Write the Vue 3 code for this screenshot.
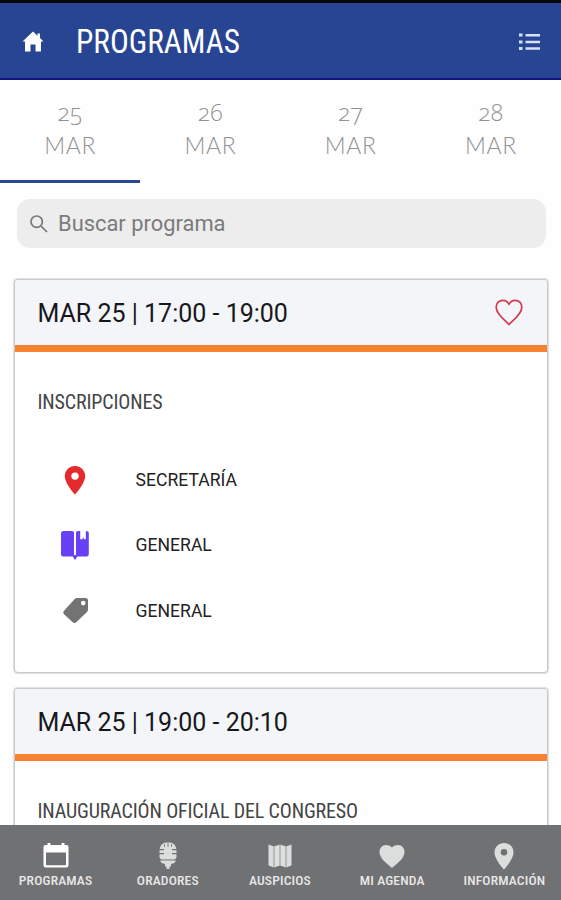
<template>
  <div class="app-page">
    <header class="top-bar">
      <svg class="home-icon" viewBox="0 0 22 21">
        <path d="M11 0.5 L0.5 10.5 H3 V20.5 H8.5 V13.5 H13.5 V20.5 H19 V10.5 H21.5 L18 7 V2.5 H15.5 V4.7 Z" />
      </svg>
      <h1 class="page-title"><span>PROGRAMAS</span></h1>
      <svg class="list-icon" viewBox="0 0 21 18">
        <path d="M0 0.5h3.5v3H0zM0 7.5h3.5v3H0zM0 14h3.5v3H0zM6.5 1h14.5v2.4H6.5zM6.5 7.8h14.5v2.4H6.5zM6.5 14.3h14.5v2.4H6.5z" />
      </svg>
    </header>

    <nav class="day-tabs">
      <button v-for="day in days" :key="day" :class="['day-tab', { active: day === selectedDay }]" @click="selectedDay = day">
        <span class="day-number">{{ day }}</span>
        <span class="day-month">MAR</span>
      </button>
    </nav>

    <label class="search-box">
      <svg class="search-icon" viewBox="0 0 18 18">
        <circle cx="6.7" cy="6.7" r="5.7" />
        <path d="M11 11 L17 17" />
      </svg>
      <input v-model="search" type="text" placeholder="Buscar programa" />
    </label>

    <main class="program-list">
      <article v-for="item in programs" :key="item.time" class="program-card">
        <div class="card-header">
          <span>{{ item.time }}</span>
          <svg v-if="item.favorite" class="heart-icon" viewBox="0 0 28 27">
            <path d="M14 25.5 C10 21.5 1.2 15 1.2 8.5 C1.2 4 4.2 1.3 7.8 1.3 C10.7 1.3 12.7 2.8 14 5.2 C15.3 2.8 17.3 1.3 20.2 1.3 C23.8 1.3 26.8 4 26.8 8.5 C26.8 15 18 21.5 14 25.5 Z" />
          </svg>
        </div>
        <div class="card-body">
          <h2 class="program-title">{{ item.title }}</h2>
          <ul class="detail-list">
            <li v-for="detail in item.details" :key="detail.icon">
              <svg class="detail-icon" viewBox="0 0 30 30">
                <path v-if="detail.icon === 'pin'" fill="#e52a2e" fill-rule="evenodd" d="M15 1 C9.2 1 4.8 5.5 4.8 11.2 C4.8 18.3 15 29.5 15 29.5 S25.2 18.3 25.2 11.2 C25.2 5.5 20.8 1 15 1 Z M15 7.4 a3.7 3.7 0 1 1 0 7.4 a3.7 3.7 0 1 1 0-7.4 Z" />
                <path v-else-if="detail.icon === 'book'" fill="#6840f5" d="M3.5 1 H12 Q14 1 14 3 V25 H16 V3 Q16 1 18 1 H20.2 V9.2 H22.2 L23.2 7.5 L24.2 9.2 H25.8 V1 Q28.8 1 28.8 3 V24 Q28.8 26.5 26.5 26.5 H17.2 L15.5 29.5 H14.5 L12.8 26.5 H3.5 Q1 26.5 1 24 V3.5 Q1 1 3.5 1 Z" />
                <path v-else fill="#737373" fill-rule="evenodd" d="M17 2 H25.5 Q28 2 28 4.5 V13.5 Q28 15 27 16 L16.5 26 Q14.5 27.8 12.5 26 L4 18.2 Q2.3 16.5 4 14.8 L14.5 3.2 Q15.5 2 17 2 Z M23.2 4.8 a2.3 2.3 0 1 0 0 4.6 a2.3 2.3 0 1 0 0-4.6 Z" />
              </svg>
              <span>{{ detail.text }}</span>
            </li>
          </ul>
        </div>
      </article>
    </main>

    <nav class="bottom-bar">
      <a v-for="tab in tabs" :key="tab.label" :class="['bottom-tab', { active: tab.icon === 'calendar' }]">
        <svg class="tab-icon" viewBox="0 0 28 28">
          <path v-if="tab.icon === 'calendar'" fill-rule="evenodd" d="M5.5 1 H8.5 V3 H19.5 V1 H22.5 V3 H24.5 Q26.5 3 26.5 5 V23 Q26.5 25.5 24 25.5 H4 Q1.5 25.5 1.5 23 V5 Q1.5 3 3.5 3 H5.5 Z M4 10.5 V22.3 Q4 23.3 5 23.3 H23 Q24 23.3 24 22.3 V10.5 Z" />
          <template v-else-if="tab.icon === 'mic'">
            <path d="M12.5 0.5 H15.5 Q21.5 1 22.3 7 H18 V8.2 H22.5 V11 H18 V12.2 H22.5 V15 Q22.5 17 20 17.5 H8 Q5.5 17 5.5 15 V12.2 H10 V11 H5.5 V8.2 H10 V7 H5.7 Q6.5 1 12.5 0.5 Z M6 18.5 H22 Q21 21.5 17 22 V24.5 H15.5 V27 H12.5 V24.5 H11 V22 Q7 21.5 6 18.5 Z" />
            <path class="mic-line" d="M10.5 2 V5 M14 1 V5 M17.5 2 V5" />
          </template>
          <template v-else-if="tab.icon === 'map'">
            <path d="M2.5 2.5 L8 4.5 L14 2.5 L20 4.5 L25.5 2.5 V23.5 L20 25.5 L14 23.5 L8 25.5 L2.5 23.5 Z" />
            <path class="map-fold" d="M8 4.5 V25.5 M14 2.5 V23.5 M20 4.5 V25.5" />
          </template>
          <path v-else-if="tab.icon === 'heart'" d="M14 26 C8 21 1.5 16 1.5 10 C1.5 5.8 4.4 3 8 3 C10.8 3 12.8 4.2 14 5.5 C15.2 4.2 17.2 3 20 3 C23.6 3 26.5 5.8 26.5 10 C26.5 16 20 21 14 26 Z" />
          <path v-else fill-rule="evenodd" d="M14 1 C8.7 1 4.5 5 4.5 10.5 C4.5 17.5 14 27.5 14 27.5 S23.5 17.5 23.5 10.5 C23.5 5 19.3 1 14 1 Z M14 7 a3.3 3.3 0 1 1 0 6.6 a3.3 3.3 0 1 1 0-6.6 Z" />
        </svg>
        <span class="tab-label">{{ tab.label }}</span>
      </a>
    </nav>
  </div>
</template>

<script setup>
import { ref } from 'vue'

const days = ['25', '26', '27', '28']
const selectedDay = ref('25')
const search = ref('')

const programs = ref([
  {
    time: 'MAR 25 | 17:00 - 19:00',
    title: 'INSCRIPCIONES',
    favorite: true,
    details: [
      { icon: 'pin', text: 'SECRETARÍA' },
      { icon: 'book', text: 'GENERAL' },
      { icon: 'tag', text: 'GENERAL' }
    ]
  },
  {
    time: 'MAR 25 | 19:00 - 20:10',
    title: 'INAUGURACIÓN OFICIAL DEL CONGRESO',
    favorite: false,
    details: []
  }
])

const tabs = [
  { icon: 'calendar', label: 'PROGRAMAS' },
  { icon: 'mic', label: 'ORADORES' },
  { icon: 'map', label: 'AUSPICIOS' },
  { icon: 'heart', label: 'MI AGENDA' },
  { icon: 'pin', label: 'INFORMACIÓN' }
]
</script>

<style>
body {
  margin: 0;
  background: #fefefe;
}
</style>

<style scoped>
.app-page {
  height: 900px;
  display: flex;
  flex-direction: column;
  overflow: hidden;
  font-family: Roboto, 'Liberation Sans', sans-serif;
}
.top-bar {
  box-sizing: border-box;
  height: 80px;
  flex-shrink: 0;
  display: flex;
  align-items: center;
  padding: 2px 21px 0 22px;
  background: #284593;
  border-top: 3px solid #050608;
  border-bottom: 2px solid #10147c;
}
.home-icon {
  width: 22px;
  height: 21px;
  margin-right: 32px;
  fill: #fff;
}
.page-title {
  flex: 1;
  margin: 0 0 2px;
  color: #fff;
  font-size: 34px;
  font-weight: 400;
  font-stretch: 75%;
}
.page-title span {
  display: inline-block;
  transform: scaleX(0.92);
  transform-origin: left;
}
.list-icon {
  width: 21px;
  height: 18px;
  fill: #d5e2fb;
}
.day-tabs {
  display: grid;
  grid-template-columns: repeat(4, 1fr);
  height: 103px;
  flex-shrink: 0;
}
.day-tab {
  display: flex;
  flex-direction: column;
  align-items: center;
  padding: 16px 0 0;
  border: 0;
  border-bottom: 3px solid transparent;
  background: transparent;
  color: #929292;
  font-family: 'Open Sans', sans-serif;
  font-size: 23px;
  font-weight: 300;
  line-height: 33px;
}
.day-tab.active {
  border-bottom-color: #2a4697;
}
.day-number {
  font-variant-numeric: oldstyle-nums;
  letter-spacing: 0.3px;
}
.day-month {
  font-family: Lato, sans-serif;
  letter-spacing: 0.6px;
}
.search-box {
  box-sizing: border-box;
  height: 49px;
  flex-shrink: 0;
  display: flex;
  align-items: center;
  margin: 16px 15px 30px 17px;
  padding: 0 13px;
  border-radius: 13px;
  background: #ededed;
}
.search-icon {
  width: 18px;
  height: 18px;
  margin-right: 10px;
  fill: none;
  stroke: #777;
  stroke-width: 1.7;
}
.search-box input {
  flex: 1;
  padding: 0;
  border: 0;
  outline: 0;
  background: transparent;
  font-family: inherit;
  font-size: 21.9px;
}
.search-box input::placeholder {
  color: #7b7b7b;
}
.program-list {
  flex: 1;
  min-height: 0;
  overflow: hidden;
  padding: 0 13px 0 14px;
}
.program-card {
  box-sizing: border-box;
  height: 394px;
  margin: 0 0 15px;
  border: 1px solid #c9cacc;
  border-radius: 4px;
  background: #fff;
  box-shadow: 0 0 1px 0.5px #dddee0;
}
.program-card:first-child {
  margin-top: 1px;
}
.card-header {
  box-sizing: border-box;
  height: 72px;
  display: flex;
  align-items: center;
  justify-content: space-between;
  padding: 1px 24px 0 22.5px;
  border-bottom: 7px solid #f98232;
  border-radius: 3px 3px 0 0;
  background: #f3f5f9;
  color: #17181b;
  font-size: 25px;
}
.heart-icon {
  width: 28px;
  height: 27px;
  margin-top: -2px;
  fill: none;
  stroke: #d33b4d;
  stroke-width: 1.7;
}
.card-body {
  padding: 36px 22.5px 0;
}
.program-title {
  margin: 0 0 31px;
  color: #444;
  font-size: 20px;
  font-weight: 400;
  font-stretch: 75%;
  line-height: 28px;
  letter-spacing: -0.15px;
}
.detail-list {
  margin: 0;
  padding: 0;
  list-style: none;
}
.detail-list li {
  display: flex;
  align-items: center;
  height: 65.5px;
  padding-left: 22.5px;
  color: #222;
  font-size: 17.6px;
}
.detail-icon {
  width: 30px;
  height: 30px;
  margin-right: 45.5px;
}
.bottom-bar {
  height: 75px;
  flex-shrink: 0;
  display: grid;
  grid-template-columns: repeat(5, 1fr);
  background: #707172;
}
.bottom-tab {
  display: flex;
  flex-direction: column;
  align-items: center;
  padding-top: 17px;
  color: #dcdddd;
}
.bottom-tab.active {
  color: #fff;
}
.tab-icon {
  width: 28px;
  height: 28px;
  margin-right: 1px;
  fill: currentColor;
}
.mic-line {
  stroke: #707172;
  stroke-width: 0.8;
}
.map-fold {
  stroke: #949595;
  stroke-width: 1;
}
.tab-label {
  margin: 1px 1px 0 0;
  color: #e7e7e7;
  font-size: 13.6px;
  font-weight: 500;
  font-stretch: 75%;
  line-height: 18px;
  letter-spacing: 0.15px;
  white-space: nowrap;
}
</style>
